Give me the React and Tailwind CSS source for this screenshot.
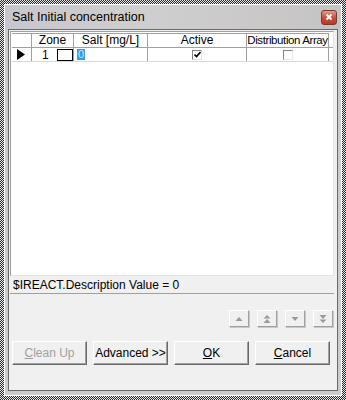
import React from "react";

const font = { fontFamily: '"Liberation Sans", Arial, sans-serif' };

function ArrowBtn({ kind }) {
  return (
    <div className="w-[20px] h-[17px] bg-[#f0f0f0] border border-t-white border-l-white border-b-[#a0a0a0] border-r-[#a0a0a0] flex items-center justify-center shadow-[1px_1px_0_#c8c8c8]">
      <svg width="10" height="10" viewBox="0 0 10 10" fill="#9a9a9a">
        {kind === "up" && <path d="M1.5 7 L5 3 L8.5 7 Z" />}
        {kind === "top" && (
          <>
            <path d="M1.5 4.5 L5 1 L8.5 4.5 Z" />
            <path d="M1.5 9 L5 5 L8.5 9 Z" />
          </>
        )}
        {kind === "down" && <path d="M1.5 3 L5 7 L8.5 3 Z" />}
        {kind === "bottom" && (
          <>
            <path d="M1.5 1 L5 5 L8.5 1 Z" />
            <path d="M1.5 5.5 L5 9 L8.5 5.5 Z" />
          </>
        )}
      </svg>
    </div>
  );
}

function Btn({ children, disabled }) {
  return (
    <div
      className={
        "w-[75px] h-[24px] bg-[#f0f0f0] border border-t-white border-l-white border-b-[#696969] border-r-[#696969] shadow-[inset_-1px_-1px_0_#a0a0a0] flex items-center justify-center whitespace-nowrap text-[12px] " +
        (disabled ? "text-[#a0a0a0]" : "text-black")
      }
    >
      {children}
    </div>
  );
}

export default function App() {
  return (
    <div
      className="w-[346px] h-[400px] p-[4px] bg-[repeating-conic-gradient(#2a2a2a_0_25%,#e8e8e8_0_50%)] bg-[length:2px_2px]"
      style={font}
    >
      <div className="w-full h-full border border-white bg-[#cbcbcb] flex flex-col">
        {/* title bar */}
        <div className="h-[24px] shrink-0 flex items-center justify-between pl-[7px] pr-[4px] bg-[linear-gradient(90deg,#c6c6ce,#cfcfcf_40%,#cac7c7_80%,#c4c4c4)]">
          <span className="text-[12.5px] text-black">Salt Initial concentration</span>
          <div className="w-[16px] h-[15px] rounded-[3px] border border-[#7a3a30] bg-[linear-gradient(#e89a88,#c8503c_50%,#b83a28)] flex items-center justify-center">
            <svg width="8" height="8" viewBox="0 0 8 8" stroke="white" strokeWidth="2">
              <path d="M1.5 1.5 L6.5 6.5 M6.5 1.5 L1.5 6.5" />
            </svg>
          </div>
        </div>

        {/* client */}
        <div className="flex-1 mx-[3px] mb-[4px] border border-[#6a6a6a] bg-[#f0f0f0] flex flex-col pl-px pr-[3px] pt-[1px]">
          {/* grid */}
          <div className="h-[245px] bg-white border border-t-[#a0a0a0] border-l-[#a0a0a0] border-b-[#e3e3e3] border-r-[#e3e3e3] flex flex-col pt-px pl-px">
            <div className="flex h-[15px] border-b border-[#a0a0a0] text-[12px] leading-[13px] text-black">
              <div className="w-[20px] border-r border-t border-[#a0a0a0]" />
              <div className="w-[42px] border-r border-t border-[#a0a0a0] flex items-center justify-center">Zone</div>
              <div className="w-[74px] border-r border-t border-[#a0a0a0] flex items-center justify-center">Salt [mg/L]</div>
              <div className="w-[99px] border-r border-t border-[#a0a0a0] flex items-center justify-center">Active</div>
              <div className="w-[82px] border-r border-t border-[#a0a0a0] flex items-center justify-center whitespace-nowrap text-[11.5px] tracking-[-0.4px]">Distribution Array</div>
            </div>
            <div className="flex h-[14px] border-b border-[#d8d8d8] text-[12px] text-black">
              <div className="w-[20px] border-r border-[#a0a0a0] flex items-center pl-[5px]">
                <svg width="8" height="11" viewBox="0 0 8 11"><path d="M0 0 L8 5.5 L0 11 Z" fill="black" /></svg>
              </div>
              <div className="w-[42px] border-r border-[#a0a0a0] flex items-center">
                <span className="w-[25px] pl-[10px]">1</span>
                <div className="w-[16px] h-[12px] border border-black bg-white" />
              </div>
              <div className="w-[74px] border-r border-[#a0a0a0] flex items-center pl-[3px]">
                <span className="bg-[#3399ff] text-[#cfe6ff] text-[11px] leading-[11px] px-px">0</span>
              </div>
              <div className="w-[99px] border-r border-[#a0a0a0] flex items-center justify-center">
                <div className="w-[10px] h-[10px] border border-t-[#808080] border-l-[#808080] border-b-[#e0e0e0] border-r-[#e0e0e0] bg-white flex items-center justify-center">
                  <svg width="7" height="7" viewBox="0 0 7 7"><path d="M0.5 3.5 L2.5 5.5 L6.5 1" stroke="black" strokeWidth="1.6" fill="none" /></svg>
                </div>
              </div>
              <div className="w-[82px] border-r border-[#a0a0a0] flex items-center justify-center">
                <div className="w-[10px] h-[10px] border border-t-[#808080] border-l-[#808080] border-b-[#e8e8e8] border-r-[#e8e8e8] bg-white" />
              </div>
            </div>
          </div>

          {/* status */}
          <div className="h-[18px] border-b border-[#a0a0a0] flex items-center pl-[3px] text-[12px] text-black">
            $IREACT.Description Value = 0
          </div>

          {/* arrows */}
          <div className="flex justify-end gap-[8px] mt-[16px] pr-[1px]">
            <ArrowBtn kind="up" />
            <ArrowBtn kind="top" />
            <ArrowBtn kind="down" />
            <ArrowBtn kind="bottom" />
          </div>

          {/* buttons */}
          <div className="flex gap-[6px] mt-[14px] pl-[2px]">
            <Btn disabled><span><u>C</u>lean Up</span></Btn>
            <Btn>Advanced &gt;&gt;</Btn>
            <Btn><span><u>O</u>K</span></Btn>
            <Btn><span><u>C</u>ancel</span></Btn>
          </div>
        </div>
      </div>
    </div>
  );
}
